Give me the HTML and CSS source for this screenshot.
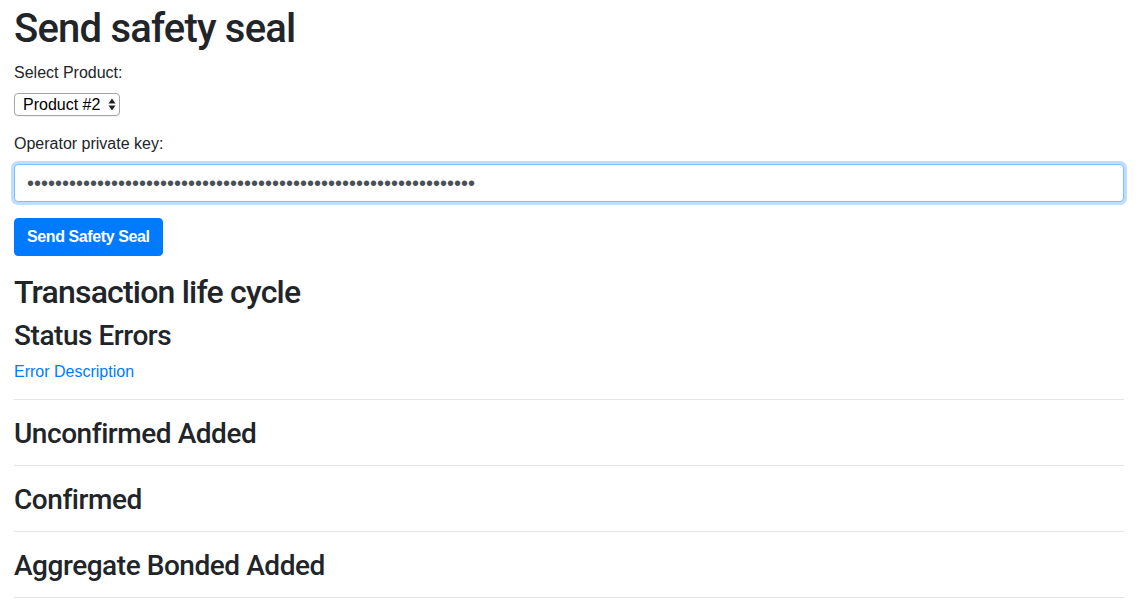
FILE: index.html
```html
<!DOCTYPE html>
<html lang="en">
<head>
<meta charset="utf-8">
<title>Send safety seal</title>
<link rel="stylesheet" href="styles.css">
</head>
<body>
<div class="container">
  <h1 class="page-title">Send safety seal</h1>
  <form class="seal-form">
    <div class="form-group">
      <label class="form-label" for="product">Select Product:</label>
      <div class="select-wrap">
        <select id="product" class="product-select">
          <option>Product #1</option>
          <option selected>Product #2</option>
          <option>Product #3</option>
        </select>
        <svg class="select-arrows" width="8" height="13" viewBox="0 0 8 13" aria-hidden="true">
          <path d="M0.5 5.5 L4 0.5 L7.5 5.5 Z" fill="#222"/>
          <path d="M0.5 7.5 L4 12.5 L7.5 7.5 Z" fill="#222"/>
        </svg>
      </div>
    </div>
    <div class="form-group">
      <label class="form-label" for="pkey">Operator private key:</label>
      <input id="pkey" class="form-control is-focused" type="password" value="0000000000000000000000000000000000000000000000000000000000000000">
    </div>
    <button type="button" class="btn-primary">Send Safety Seal</button>
  </form>

  <h2 class="section-title">Transaction life cycle</h2>
  <h3 class="sub-title">Status Errors</h3>
  <a class="error-link" href="#">Error Description</a>
  <hr class="divider">
  <h3 class="sub-title list-title">Unconfirmed Added</h3>
  <hr class="divider">
  <h3 class="sub-title list-title">Confirmed</h3>
  <hr class="divider">
  <h3 class="sub-title list-title">Aggregate Bonded Added</h3>
  <hr class="divider">
</div>
</body>
</html>
```
FILE: styles.css
```css
html, body {
  margin: 0;
  padding: 0;
  background: #fff;
}
body {
  font-family: "Liberation Sans", Arial, sans-serif;
  font-size: 16px;
  line-height: 1.5;
  color: #212529;
}
.container {
  padding: 5px 19px 0 14px;
}
.page-title,
.section-title,
.sub-title {
  font-family: Roboto, "Liberation Sans", Arial, sans-serif;
  font-weight: 500;
}
.page-title {
  margin: 0 0 8px;
  font-size: 40px;
  line-height: 48px;
  letter-spacing: -0.8px;
}
.seal-form {
  display: flex;
  flex-direction: column;
  align-items: flex-start;
  margin: 0 0 17px;
}
.form-group {
  display: flex;
  flex-direction: column;
  align-items: flex-start;
  align-self: stretch;
  margin-bottom: 16px;
}
.form-label {
  display: block;
  margin-bottom: 8px;
  line-height: 24px;
}
.select-wrap {
  position: relative;
  display: inline-flex;
}
.product-select {
  -webkit-appearance: none;
  appearance: none;
  display: block;
  width: 106px;
  height: 23px;
  margin: 0;
  padding: 0 16px 0 8px;
  border: 1px solid #a5a5a5;
  border-radius: 4px;
  background: #fff;
  font-family: inherit;
  font-size: 16px;
  color: #000;
  line-height: 21px;
  box-shadow: 0 1px 1px rgba(0,0,0,0.05);
}
.select-arrows {
  position: absolute;
  right: 4px;
  top: 5px;
  pointer-events: none;
}
.form-control {
  box-sizing: border-box;
  display: block;
  width: 100%;
  height: 38px;
  margin: 0;
  padding: 0 12px;
  font-family: inherit;
  font-size: 20px;
  color: #495057;
  background: #fff;
  border: 1px solid #ced4da;
  border-radius: 4px;
  letter-spacing: 0;
  outline: none;
}
.form-control.is-focused,
.form-control:focus {
  border-color: #80bdff;
  box-shadow: 0 0 0 3px rgba(0, 123, 255, 0.25);
}
.btn-primary {
  display: inline-block;
  height: 38px;
  padding: 6px 12px;
  font-family: inherit;
  font-size: 16px;
  font-weight: 700;
  letter-spacing: -0.4px;
  line-height: 24px;
  color: #fff;
  background: #007bff;
  border: 1px solid #007bff;
  border-radius: 4px;
  cursor: pointer;
}
.section-title {
  margin: 0 0 8px;
  font-size: 32px;
  line-height: 38px;
  letter-spacing: -0.8px;
}
.sub-title {
  margin: 0 0 7px;
  font-size: 28px;
  line-height: 34px;
  letter-spacing: -0.45px;
}
.sub-title.list-title {
  margin: 0;
}
.error-link {
  display: block;
  padding-bottom: 1px;
  color: #007bff;
  text-decoration: none;
  line-height: 24px;
}
.divider {
  margin: 14px 0 17px;
  border: 0;
  border-top: 1px solid rgba(0, 0, 0, 0.1);
  height: 0;
}
```
